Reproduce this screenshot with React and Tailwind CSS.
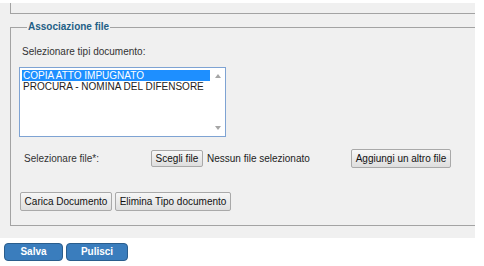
import React from 'react';

const docTypes = ['COPIA ATTO IMPUGNATO', 'PROCURA - NOMINA DEL DIFENSORE'];

const GrayButton = ({ children, className = '' }) => (
    <button
        type="button"
        className={`border border-[#a9a9a9] rounded-[2px] bg-gradient-to-b from-[#f7f7f7] to-[#dedede] text-[10px] text-[#111] leading-none px-[3px] ${className}`}
    >
        {children}
    </button>
);

const BlueButton = ({ children, className = '' }) => (
    <button
        type="button"
        className={`h-[18px] border border-[#2a5d8c] rounded-[4px] bg-[#3a7dbd] text-white font-bold text-[10px] leading-none ${className}`}
    >
        {children}
    </button>
);

const App = () => {
    return (
        <div className="w-[484px] h-[266px] bg-white overflow-hidden text-[10px] text-[#333] font-['Liberation_Sans',Arial,sans-serif]">
            {/* Gray panel */}
            <div className="mt-[3px] w-[475px] h-[235px] bg-[#f0f0f0] overflow-hidden">
                {/* tail of the previous section */}
                <div className="ml-[10px] w-[470px] h-[11px] border-l border-b border-[#a3a3a3]" />

                <fieldset className="mt-[7px] ml-[10px] w-[470px] border border-[#a3a3a3] pl-[8px] pb-[14px]">
                    <legend className="ml-[8px] px-[1px] font-bold text-[10px] leading-[12px] text-[#1f5f86]">
                        Associazione file
                    </legend>

                    <div className="pt-[13px] pl-[3px] leading-[12px]">Selezionare tipi documento:</div>

                    {/* Listbox */}
                    <div className="mt-[9px] w-[207px] h-[70px] flex border border-[#7ea3d3] bg-white">
                        <div className="flex-1 pt-[2px] pl-[2px] text-[#222]">
                            {docTypes.map((t, i) => (
                                <div
                                    key={t}
                                    className={`h-[11px] leading-[11px] pl-[1px] whitespace-nowrap ${i === 0 ? 'bg-[#1e8fff] text-white' : ''}`}
                                >
                                    {t}
                                </div>
                            ))}
                        </div>
                        <div className="w-[15px] flex flex-col items-center justify-between py-[6px]">
                            <svg width="6" height="4" viewBox="0 0 6 4">
                                <path d="M3 0 L6 4 L0 4 Z" fill="#a6a6a6" />
                            </svg>
                            <svg width="6" height="4" viewBox="0 0 6 4">
                                <path d="M0 0 L6 0 L3 4 Z" fill="#a6a6a6" />
                            </svg>
                        </div>
                    </div>

                    {/* File row */}
                    <div className="mt-[12px] flex items-center">
                        <div className="w-[132px] pl-[5px]">Selezionare file*:</div>
                        <div className="w-[200px] flex items-center">
                            <GrayButton className="h-[17px] w-[52px]">Scegli file</GrayButton>
                            <span className="ml-[4px] text-[#222]">Nessun file selezionato</span>
                        </div>
                        <GrayButton className="h-[19px] w-[100px]">Aggiungi un altro file</GrayButton>
                    </div>

                    {/* Actions */}
                    <div className="mt-[24px] ml-[1px] flex gap-[3px]">
                        <GrayButton className="h-[19px] w-[92px]">Carica Documento</GrayButton>
                        <GrayButton className="h-[19px] w-[116px]">Elimina Tipo documento</GrayButton>
                    </div>
                </fieldset>
            </div>

            {/* Bottom buttons */}
            <div className="mt-[5px] ml-[4px] flex gap-[3px]">
                <BlueButton className="w-[59px]">Salva</BlueButton>
                <BlueButton className="w-[62px]">Pulisci</BlueButton>
            </div>
        </div>
    );
};

export default App;
